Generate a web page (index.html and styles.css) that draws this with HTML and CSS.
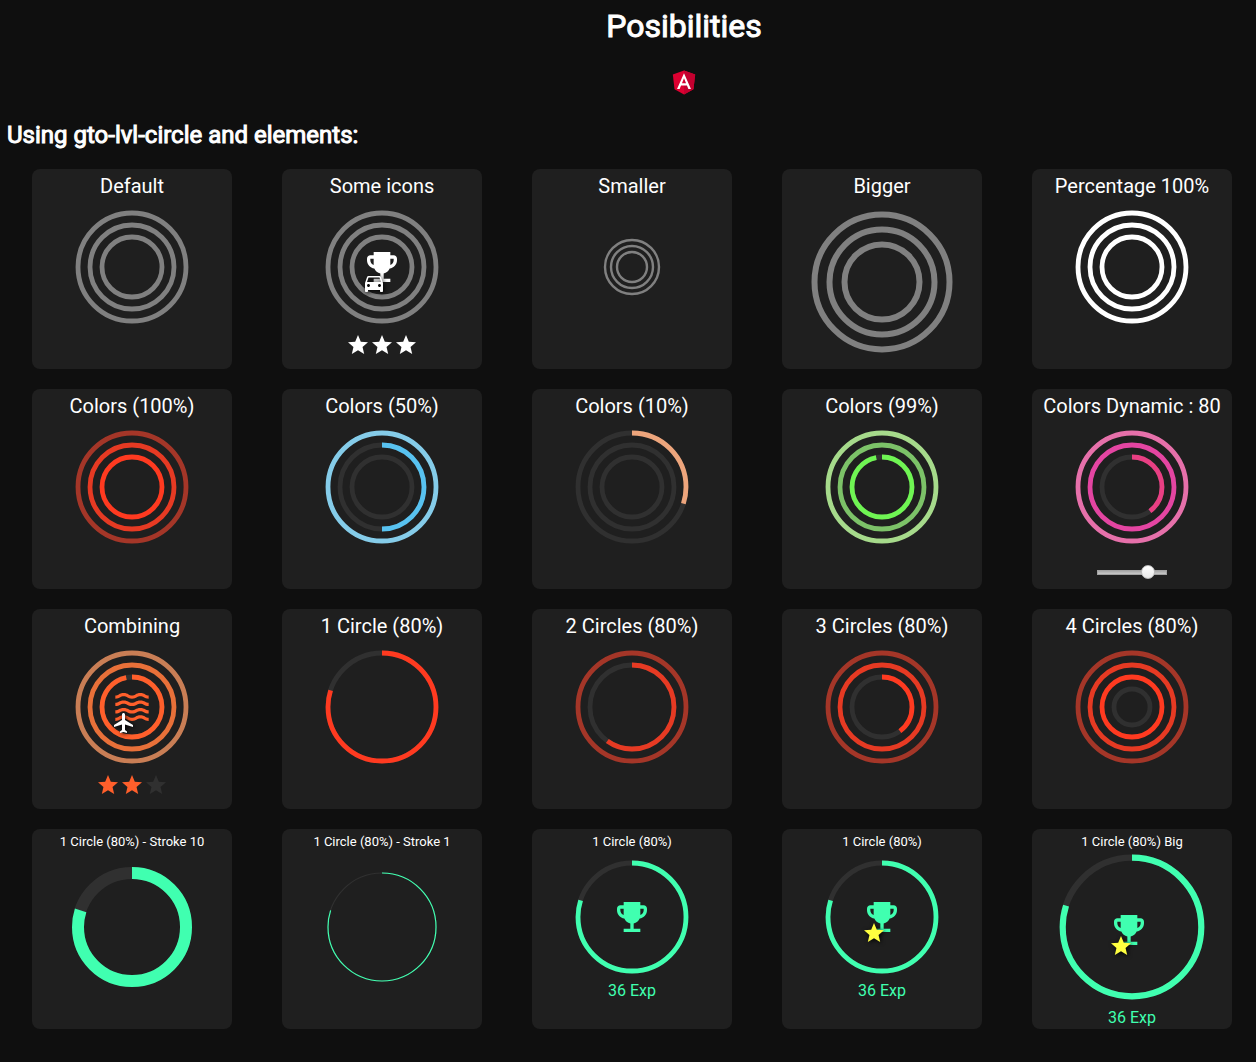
FILE: index.html
```html
<!DOCTYPE html>
<html lang="en">
<head>
<meta charset="utf-8">
<title>Posibilities</title>
<link rel="stylesheet" href="styles.css">
</head>
<body>
<svg class="sprite" aria-hidden="true">
  <symbol id="trophy" viewBox="0 0 24 24"><path d="M19 5h-2V3H7v2H5c-1.1 0-2 .9-2 2v1c0 2.55 1.92 4.63 4.39 4.94.63 1.5 1.98 2.63 3.61 2.96V19H7v2h10v-2h-4v-3.1c1.63-.33 2.98-1.46 3.61-2.96C19.08 12.63 21 10.55 21 8V7c0-1.1-.9-2-2-2zM5 8V7h2v3.82C5.84 10.4 5 9.3 5 8zm14 0c0 1.3-.84 2.4-2 2.82V7h2v1z"/></symbol>
  <symbol id="star" viewBox="0 0 24 24"><path d="M12 17.27L18.18 21l-1.64-7.03L22 9.24l-7.19-.61L12 2 9.19 8.63 2 9.24l5.46 4.73L5.82 21z"/></symbol>
  <symbol id="car" viewBox="0 0 24 24"><path d="M18.92 6.01C18.72 5.42 18.16 5 17.5 5h-11c-.66 0-1.21.42-1.42 1.01L3 12v8c0 .55.45 1 1 1h1c.55 0 1-.45 1-1v-1h12v1c0 .55.45 1 1 1h1c.55 0 1-.45 1-1v-8l-2.08-5.99zM6.5 16c-.83 0-1.5-.67-1.5-1.5S5.67 13 6.5 13s1.5.67 1.5 1.5S7.33 16 6.5 16zm11 0c-.83 0-1.5-.67-1.5-1.5s.67-1.5 1.5-1.5 1.5.67 1.5 1.5-.67 1.5-1.5 1.5zM5 11l1.5-4.5h11L19 11H5z"/></symbol>
  <symbol id="plane" viewBox="0 0 24 24"><path d="M21 16v-2l-8-5V3.5c0-.83-.67-1.5-1.5-1.5S10 2.67 10 3.5V9l-8 5v2l8-2.5V19l-2 1.5V22l3.5-1 3.5 1v-1.5L13 19v-5.5l8 2.5z"/></symbol>
  <symbol id="wave-line" viewBox="0 0 24 24" overflow="visible"><path d="M17 16.99c-1.35 0-2.2.42-2.95.8-.65.33-1.18.6-2.05.6-.9 0-1.4-.25-2.05-.6-.75-.38-1.57-.8-2.95-.8s-2.2.42-2.95.8c-.65.33-1.17.6-2.05.6v1.95c1.35 0 2.2-.42 2.95-.8.65-.33 1.17-.6 2.05-.6s1.4.25 2.05.6c.75.38 1.57.8 2.95.8s2.2-.42 2.95-.8c.65-.33 1.18-.6 2.05-.6.9 0 1.4.25 2.05.6.75.38 1.58.8 2.95.8v-1.95c-.9 0-1.4-.25-2.05-.6-.75-.38-1.6-.8-2.95-.8z"/></symbol>
  <symbol id="waves" viewBox="0 0 24 24">
    <use href="#wave-line" width="24" height="24"/>
    <use href="#wave-line" y="-4.45" width="24" height="24"/>
    <use href="#wave-line" y="-8.92" width="24" height="24"/>
    <use href="#wave-line" y="-13.35" width="24" height="24"/>
  </symbol>
</svg>

<header class="page-header">
  <h1 class="page-title">Posibilities</h1>
  <svg class="logo" viewBox="0 0 250 250" role="img" aria-label="Angular">
    <path fill="#dd0031" d="M125 30L31.9 63.2l14.2 123.1L125 230l78.9-43.7 14.2-123.1z"/>
    <path fill="#c3002f" d="M125 30v200l78.9-43.7 14.2-123.1z"/>
    <path fill="#fff" d="M125 52.1L66.8 182.6h21.7l11.7-29.2h49.4l11.7 29.2H183L125 52.1zm17 83.3h-34l17-40.9 17 40.9z"/>
  </svg>
</header>

<main>
  <h2 class="section-title">Using gto-lvl-circle and elements:</h2>
  <div class="cards">

    <section class="card">
      <h3 class="card-title">Default</h3>
      <div class="gauge gray">
        <svg class="rings" viewBox="0 0 100 100"><circle class="outer" cx="50" cy="50" r="45"/><circle class="middle" cx="50" cy="50" r="35"/><circle class="inner" cx="50" cy="50" r="25"/></svg>
      </div>
    </section>

    <section class="card">
      <h3 class="card-title">Some icons</h3>
      <div class="gauge gray">
        <svg class="rings" viewBox="0 0 100 100"><circle class="outer" cx="50" cy="50" r="45"/><circle class="middle" cx="50" cy="50" r="35"/><circle class="inner" cx="50" cy="50" r="25"/></svg>
        <svg class="icon white-icon"><use href="#trophy"/></svg>
        <svg class="badge white-icon"><use href="#car"/></svg>
      </div>
      <div class="stars white-icon">
        <svg class="star"><use href="#star"/></svg><svg class="star"><use href="#star"/></svg><svg class="star"><use href="#star"/></svg>
      </div>
    </section>

    <section class="card">
      <h3 class="card-title">Smaller</h3>
      <div class="gauge small gray">
        <svg class="rings" viewBox="0 0 100 100"><circle class="outer" cx="50" cy="50" r="45"/><circle class="middle" cx="50" cy="50" r="35"/><circle class="inner" cx="50" cy="50" r="25"/></svg>
      </div>
    </section>

    <section class="card">
      <h3 class="card-title">Bigger</h3>
      <div class="gauge large gray">
        <svg class="rings" viewBox="0 0 100 100"><circle class="outer" cx="50" cy="50" r="45"/><circle class="middle" cx="50" cy="50" r="35"/><circle class="inner" cx="50" cy="50" r="25"/></svg>
      </div>
    </section>

    <section class="card">
      <h3 class="card-title">Percentage 100%</h3>
      <div class="gauge white">
        <svg class="rings" viewBox="0 0 100 100"><circle class="outer" cx="50" cy="50" r="45"/><circle class="middle" cx="50" cy="50" r="35"/><circle class="inner" cx="50" cy="50" r="25"/></svg>
      </div>
    </section>

    <section class="card">
      <h3 class="card-title">Colors (100%)</h3>
      <div class="gauge red">
        <svg class="rings" viewBox="0 0 100 100"><circle class="outer" cx="50" cy="50" r="45"/><circle class="middle" cx="50" cy="50" r="35"/><circle class="inner" cx="50" cy="50" r="25"/></svg>
      </div>
    </section>

    <section class="card">
      <h3 class="card-title">Colors (50%)</h3>
      <div class="gauge blue">
        <svg class="rings" viewBox="0 0 100 100"><circle class="outer" cx="50" cy="50" r="45"/><circle class="track" cx="50" cy="50" r="35"/><circle class="middle" cx="50" cy="50" r="35" pathLength="100" stroke-dasharray="50 100"/><circle class="track" cx="50" cy="50" r="25"/></svg>
      </div>
    </section>

    <section class="card">
      <h3 class="card-title">Colors (10%)</h3>
      <div class="gauge peach">
        <svg class="rings" viewBox="0 0 100 100"><circle class="track" cx="50" cy="50" r="45"/><circle class="outer" cx="50" cy="50" r="45" pathLength="100" stroke-dasharray="30 100"/><circle class="track" cx="50" cy="50" r="35"/><circle class="track" cx="50" cy="50" r="25"/></svg>
      </div>
    </section>

    <section class="card">
      <h3 class="card-title">Colors (99%)</h3>
      <div class="gauge green">
        <svg class="rings" viewBox="0 0 100 100"><circle class="outer" cx="50" cy="50" r="45"/><circle class="middle" cx="50" cy="50" r="35"/><circle class="track" cx="50" cy="50" r="25"/><circle class="inner" cx="50" cy="50" r="25" pathLength="100" stroke-dasharray="97.4 100"/></svg>
      </div>
    </section>

    <section class="card">
      <h3 class="card-title"><label for="level">Colors Dynamic : 80</label></h3>
      <div class="gauge pink">
        <svg class="rings" viewBox="0 0 100 100"><circle class="outer" cx="50" cy="50" r="45"/><circle class="middle" cx="50" cy="50" r="35"/><circle class="track" cx="50" cy="50" r="25"/><circle class="inner" cx="50" cy="50" r="25" pathLength="100" stroke-dasharray="40 100"/></svg>
      </div>
      <input class="slider" id="level" type="range" min="0" max="100" value="80">
    </section>

    <section class="card">
      <h3 class="card-title">Combining</h3>
      <div class="gauge orange">
        <svg class="rings" viewBox="0 0 100 100"><circle class="outer" cx="50" cy="50" r="45"/><circle class="middle" cx="50" cy="50" r="35"/><circle class="track" cx="50" cy="50" r="25"/><circle class="inner" cx="50" cy="50" r="25" pathLength="100" stroke-dasharray="97.4 100"/></svg>
        <svg class="icon"><use href="#waves"/></svg>
        <svg class="badge white-icon"><use href="#plane"/></svg>
      </div>
      <div class="stars orange">
        <svg class="star"><use href="#star"/></svg><svg class="star"><use href="#star"/></svg><svg class="star off"><use href="#star"/></svg>
      </div>
    </section>

    <section class="card">
      <h3 class="card-title">1 Circle (80%)</h3>
      <div class="gauge red">
        <svg class="rings" viewBox="0 0 100 100"><circle class="track" cx="50" cy="50" r="45"/><circle class="inner" cx="50" cy="50" r="45" pathLength="100" stroke-dasharray="80 100"/></svg>
      </div>
    </section>

    <section class="card">
      <h3 class="card-title">2 Circles (80%)</h3>
      <div class="gauge red">
        <svg class="rings" viewBox="0 0 100 100"><circle class="outer" cx="50" cy="50" r="45"/><circle class="track" cx="50" cy="50" r="35"/><circle class="middle" cx="50" cy="50" r="35" pathLength="100" stroke-dasharray="60 100"/></svg>
      </div>
    </section>

    <section class="card">
      <h3 class="card-title">3 Circles (80%)</h3>
      <div class="gauge red">
        <svg class="rings" viewBox="0 0 100 100"><circle class="outer" cx="50" cy="50" r="45"/><circle class="middle" cx="50" cy="50" r="35"/><circle class="track" cx="50" cy="50" r="25"/><circle class="inner" cx="50" cy="50" r="25" pathLength="100" stroke-dasharray="40 100"/></svg>
      </div>
    </section>

    <section class="card">
      <h3 class="card-title">4 Circles (80%)</h3>
      <div class="gauge red">
        <svg class="rings" viewBox="0 0 100 100"><circle class="outer" cx="50" cy="50" r="45"/><circle class="middle" cx="50" cy="50" r="35"/><circle class="inner" cx="50" cy="50" r="25"/><circle class="track" cx="50" cy="50" r="15"/></svg>
      </div>
    </section>

    <section class="card compact">
      <h3 class="card-title">1 Circle (80%) - Stroke 10</h3>
      <div class="gauge mint thick">
        <svg class="rings" viewBox="0 0 100 100"><circle class="track" cx="50" cy="50" r="45"/><circle class="inner" cx="50" cy="50" r="45" pathLength="100" stroke-dasharray="80 100"/></svg>
      </div>
    </section>

    <section class="card compact">
      <h3 class="card-title">1 Circle (80%) - Stroke 1</h3>
      <div class="gauge mint thin">
        <svg class="rings" viewBox="0 0 100 100"><circle class="track" cx="50" cy="50" r="45"/><circle class="inner" cx="50" cy="50" r="45" pathLength="100" stroke-dasharray="80 100"/></svg>
      </div>
    </section>

    <section class="card compact">
      <h3 class="card-title">1 Circle (80%)</h3>
      <div class="gauge mint raised">
        <svg class="rings" viewBox="0 0 100 100"><circle class="track" cx="50" cy="50" r="45"/><circle class="inner" cx="50" cy="50" r="45" pathLength="100" stroke-dasharray="80 100"/></svg>
        <svg class="icon"><use href="#trophy"/></svg>
      </div>
      <p class="points">36 Exp</p>
    </section>

    <section class="card compact">
      <h3 class="card-title">1 Circle (80%)</h3>
      <div class="gauge mint raised">
        <svg class="rings" viewBox="0 0 100 100"><circle class="track" cx="50" cy="50" r="45"/><circle class="inner" cx="50" cy="50" r="45" pathLength="100" stroke-dasharray="80 100"/></svg>
        <svg class="icon"><use href="#trophy"/></svg>
        <svg class="badge yellow-icon"><use href="#star"/></svg>
      </div>
      <p class="points">36 Exp</p>
    </section>

    <section class="card compact">
      <h3 class="card-title">1 Circle (80%) Big</h3>
      <div class="gauge mint huge">
        <svg class="rings" viewBox="0 0 100 100"><circle class="track" cx="50" cy="50" r="45"/><circle class="inner" cx="50" cy="50" r="45" pathLength="100" stroke-dasharray="80 100"/></svg>
        <svg class="icon"><use href="#trophy"/></svg>
        <svg class="badge yellow-icon"><use href="#star"/></svg>
      </div>
      <p class="points">36 Exp</p>
    </section>

  </div>
</main>
</body>
</html>
```
FILE: styles.css
```css
* { box-sizing: border-box; }

body {
  margin: 0;
  padding-bottom: 32px;
  background: #0f0f0f;
  color: #fff;
  font-family: Roboto, sans-serif;
}

.sprite { display: none; }

.page-header {
  display: flex;
  flex-direction: column;
  align-items: center;
  gap: 22px;
  padding: 7px 0 0 112px;
}

.page-title,
.section-title {
  font-weight: 400;
  -webkit-text-stroke: 1px #fff;
}

.page-title {
  margin: 0;
  font-size: 32px;
  line-height: 38px;
}

.logo { width: 30px; height: 30px; }

.section-title {
  margin: 24px 0 20px 7px;
  font-size: 24px;
  line-height: 28px;
}

.cards {
  display: grid;
  grid-template-columns: repeat(auto-fill, 200px);
  gap: 20px 50px;
  padding: 0 24px 0 32px;
}

.card {
  display: flex;
  flex-direction: column;
  align-items: center;
  min-height: 200px;
  background: #1f1f1f;
  border-radius: 8px;
}

.card-title {
  margin: 0;
  padding-top: 5px;
  font-size: 20px;
  line-height: 24px;
  font-weight: 400;
}

.compact .card-title {
  font-size: 13px;
  line-height: 16px;
}

/* Level gauges */
.gauge {
  --size: 120px;
  --stroke: 4;
  position: relative;
  width: var(--size);
  height: var(--size);
  margin-top: 9px;
}

.compact .gauge { margin-top: 17px; }
.compact .raised { margin-top: 7px; }
.compact .huge { --size: 154px; margin-top: 0; }
.small { --size: 60px; margin-top: 39px; }
.large { --size: 150px; }
.thick { --stroke: 10; }
.thin { --stroke: 1; }

.rings {
  display: block;
  width: 100%;
  height: 100%;
  transform: rotate(-90deg);
  fill: none;
  stroke-width: var(--stroke);
}

.track { stroke: #303030; }
.outer { stroke: var(--outer); }
.middle { stroke: var(--middle); }
.inner { stroke: var(--inner); }

.gray { --outer: #808080; --middle: #808080; --inner: #808080; }
.white { --outer: #fff; --middle: #fff; --inner: #fff; }
.red { --outer: #a43628; --middle: #e63a23; --inner: #ff3a20; }
.blue { --outer: #85cce9; --middle: #58c2f0; }
.peach { --outer: #eda57c; }
.green { --outer: #a6da8b; --middle: #7cc268; --inner: #6ff553; }
.pink { --outer: #e670aa; --middle: #e445a2; --inner: #e83f83; }
.orange { --outer: #c97e55; --middle: #e87039; --inner: #ff5f2b; }
.mint { --inner: #40ffb0; }

.icon {
  position: absolute;
  top: calc(50% - 20px);
  left: calc(50% - 20px);
  width: 40px;
  height: 40px;
  fill: var(--inner);
}

.badge {
  position: absolute;
  top: calc(50% + 4px);
  left: calc(50% - 20px);
  width: 24px;
  height: 24px;
  filter: drop-shadow(1px 1px 2px #000);
}

.huge .icon,
.huge .badge { margin: 3px 0 0 -3px; }

.white-icon { fill: #fff; }
.yellow-icon { fill: #ffff40; }

.stars {
  display: flex;
  margin-top: 6px;
}

.star { width: 24px; height: 24px; }
.orange .star { fill: var(--inner); }
.orange .off { fill: #303030; }

.slider {
  appearance: none;
  width: 70px;
  height: 14px;
  margin: 18px 0 0;
  background: transparent;
}

.slider::-webkit-slider-runnable-track {
  height: 5px;
  border: 1px solid #a2a2a2;
  background: linear-gradient(#a8a8a8, #c8c8c8);
}

.slider::-webkit-slider-thumb {
  appearance: none;
  width: 14px;
  height: 14px;
  margin-top: -6px;
  border: 1px solid #bbb;
  border-radius: 50%;
  background: linear-gradient(#fff, #e9e9e9);
}

.points {
  margin: 3px 0 0;
  color: #40ffb0;
  font-size: 16px;
  line-height: 22px;
}
```
